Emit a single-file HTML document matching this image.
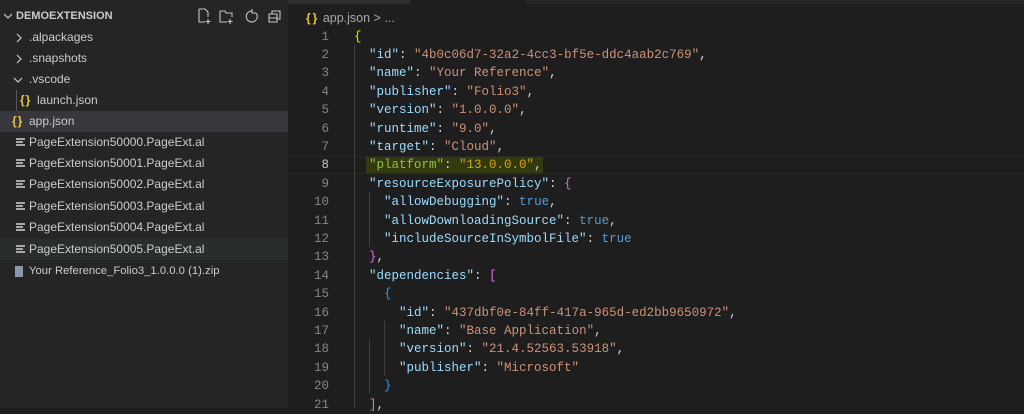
<!DOCTYPE html>
<html><head><meta charset="utf-8"><style>
*{margin:0;padding:0;box-sizing:border-box}
body{width:1024px;height:408px;overflow:hidden;background:#1e1e1e;font-family:"Liberation Sans",sans-serif;position:relative}
#side{position:absolute;left:0;top:0;width:288px;height:408px;background:#252526;color:#cccccc;font-size:12px}
.row{position:absolute;left:0;width:288px;height:21px;line-height:21px;white-space:nowrap}
.hdr{font-weight:bold;font-size:11px;color:#cccccc}
.br{color:#e8c547;font-weight:bold;font-size:12px;position:absolute;letter-spacing:1px}
.al{position:absolute;left:16px;top:6px;width:9px;height:9px}
.al i{display:block;height:1.5px;background:#a8a8a8;margin-bottom:1.5px}
#ed{position:absolute;left:288px;top:0;right:0;bottom:0}
.ln{position:absolute;left:0;width:41px;text-align:right;color:#858585;font-family:"Liberation Mono",monospace;font-size:12.5px}
.code{position:absolute;left:66px;font-family:"Liberation Mono",monospace;font-size:12.5px;white-space:pre;color:#d4d4d4}
.k{color:#9cdcfe}.s{color:#ce9178}.b{color:#569cd6}.y{color:#ffd700}.p{color:#da70d6}.bl{color:#179fff}
.guide{position:absolute;width:1px;background:#404040}
</style></head><body>
<div id="side">
<div class="row hdr" style="top:5px;height:22px;line-height:22px"><svg style="position:absolute;left:3px;top:7px" width="10" height="8"><path d="M1 2l4 4 4-4" stroke="#ccc" fill="none" stroke-width="1.2"/></svg><span style="position:absolute;left:16px">DEMOEXTENSION</span>
<svg style="position:absolute;left:197px;top:3px" width="90" height="16" fill="none" stroke="#c5c5c5" stroke-width="1.1">
<path d="M2 1h6l3 3v5M2 1v13h6M11 11v5M8.5 13.5h5"/>
<path d="M23 3h5l1 2h6v4M23 3v11h7M33 11v5M30.5 13.5h5"/>
<path d="M55 3a5.5 5.5 0 1 0 4 2M55 1v4h4"/>
<path d="M72 6h8v8h-8zM75 6V3h8v8h-3M72 10h8"/>
</svg></div>
<div class="row" style="top:27px"><svg style="position:absolute;left:15px;top:6px" width="8" height="10"><path d="M2 1l4 4-4 4" stroke="#ccc" fill="none" stroke-width="1.2"/></svg><span style="position:absolute;left:29px">.alpackages</span></div>
<div class="row" style="top:48px"><svg style="position:absolute;left:15px;top:6px" width="8" height="10"><path d="M2 1l4 4-4 4" stroke="#ccc" fill="none" stroke-width="1.2"/></svg><span style="position:absolute;left:29px">.snapshots</span></div>
<div class="row" style="top:69px"><svg style="position:absolute;left:13px;top:7px" width="10" height="8"><path d="M1 2l4 4 4-4" stroke="#ccc" fill="none" stroke-width="1.2"/></svg><span style="position:absolute;left:29px">.vscode</span></div>
<div class="row" style="top:90px"><div style="position:absolute;left:16px;top:0;width:1px;height:21px;background:#585858"></div><span class="br" style="left:20px">{}</span><span style="position:absolute;left:37px">launch.json</span></div>
<div class="row" style="top:111px;background:#37373d"><span class="br" style="left:12px">{}</span><span style="position:absolute;left:29px">app.json</span></div>
<div class="row" style="top:132px"><div class="al"><i></i><i style="width:7px"></i><i></i></div><span style="position:absolute;left:29px">PageExtension50000.PageExt.al</span></div>
<div class="row" style="top:153px"><div class="al"><i></i><i style="width:7px"></i><i></i></div><span style="position:absolute;left:29px">PageExtension50001.PageExt.al</span></div>
<div class="row" style="top:174px"><div class="al"><i></i><i style="width:7px"></i><i></i></div><span style="position:absolute;left:29px">PageExtension50002.PageExt.al</span></div>
<div class="row" style="top:196px"><div class="al"><i></i><i style="width:7px"></i><i></i></div><span style="position:absolute;left:29px">PageExtension50003.PageExt.al</span></div>
<div class="row" style="top:217px"><div class="al"><i></i><i style="width:7px"></i><i></i></div><span style="position:absolute;left:29px">PageExtension50004.PageExt.al</span></div>
<div class="row" style="top:239px;background:#2a2d2e"><div class="al"><i></i><i style="width:7px"></i><i></i></div><span style="position:absolute;left:29px">PageExtension50005.PageExt.al</span></div>
<div class="row" style="top:261px"><div style="position:absolute;left:15px;top:5px;width:8px;height:11px;background:#8a9aa8"></div><span style="position:absolute;left:29px;font-size:11.3px">Your Reference_Folio3_1.0.0.0 (1).zip</span></div>
</div>
<div id="ed">
<div style="position:absolute;left:0;top:0;width:122px;height:4px;background:#2d2d2d"></div>
<div style="position:absolute;left:237px;top:0;right:0;height:4px;background:#252526"></div>
<div style="position:absolute;left:18px;top:8px;height:20px;line-height:20px;font-size:12.5px;color:#a9a9a9;white-space:nowrap"><span class="br" style="position:static;letter-spacing:2px">{}</span> app.json &gt; ...</div>
<div style="position:absolute;left:0;right:0;top:156px;height:18px;border-top:1px solid #282828;border-bottom:1px solid #282828"></div>
<div style="position:absolute;left:78px;top:157px;width:177px;height:16px;background:#333a10"></div>
<div class="guide" style="left:66px;top:45px;height:363px"></div>
<div class="guide" style="left:81px;top:192px;height:55px"></div>
<div class="guide" style="left:81px;top:339px;height:55px"></div>
<div class="guide" style="left:96px;top:321px;height:55px"></div>
<div id="lines"></div>
</div>
<script>
var L=[
'<span class="y">{</span>',
'  <span class="k">"id"</span>: <span class="s">"4b0c06d7-32a2-4cc3-bf5e-ddc4aab2c769"</span>,',
'  <span class="k">"name"</span>: <span class="s">"Your Reference"</span>,',
'  <span class="k">"publisher"</span>: <span class="s">"Folio3"</span>,',
'  <span class="k">"version"</span>: <span class="s">"1.0.0.0"</span>,',
'  <span class="k">"runtime"</span>: <span class="s">"9.0"</span>,',
'  <span class="k">"target"</span>: <span class="s">"Cloud"</span>,',
'  <span style="color:#8fc23a">"platform"</span>: <span style="color:#d6a20a">"13.0.0.0"</span>,',
'  <span class="k">"resourceExposurePolicy"</span>: <span class="p">{</span>',
'    <span class="k">"allowDebugging"</span>: <span class="b">true</span>,',
'    <span class="k">"allowDownloadingSource"</span>: <span class="b">true</span>,',
'    <span class="k">"includeSourceInSymbolFile"</span>: <span class="b">true</span>',
'  <span class="p">}</span>,',
'  <span class="k">"dependencies"</span>: <span class="p">[</span>',
'    <span class="bl">{</span>',
'      <span class="k">"id"</span>: <span class="s">"437dbf0e-84ff-417a-965d-ed2bb9650972"</span>,',
'      <span class="k">"name"</span>: <span class="s">"Base Application"</span>,',
'      <span class="k">"version"</span>: <span class="s">"21.4.52563.53918"</span>,',
'      <span class="k">"publisher"</span>: <span class="s">"Microsoft"</span>',
'    <span class="bl">}</span>',
'  <span class="p">]</span>,'];
var h='';
for(var i=0;i<L.length;i++){var t=27.5+i*18.4;
h+='<div class="ln" style="top:'+t+'px;line-height:18px">'+(i+1)+'</div><div class="code" style="top:'+t+'px;line-height:18px">'+L[i]+'</div>';}
document.getElementById('lines').innerHTML=h;
document.querySelectorAll('.ln')[7].style.color='#c6c6c6';
</script>
</body></html>
